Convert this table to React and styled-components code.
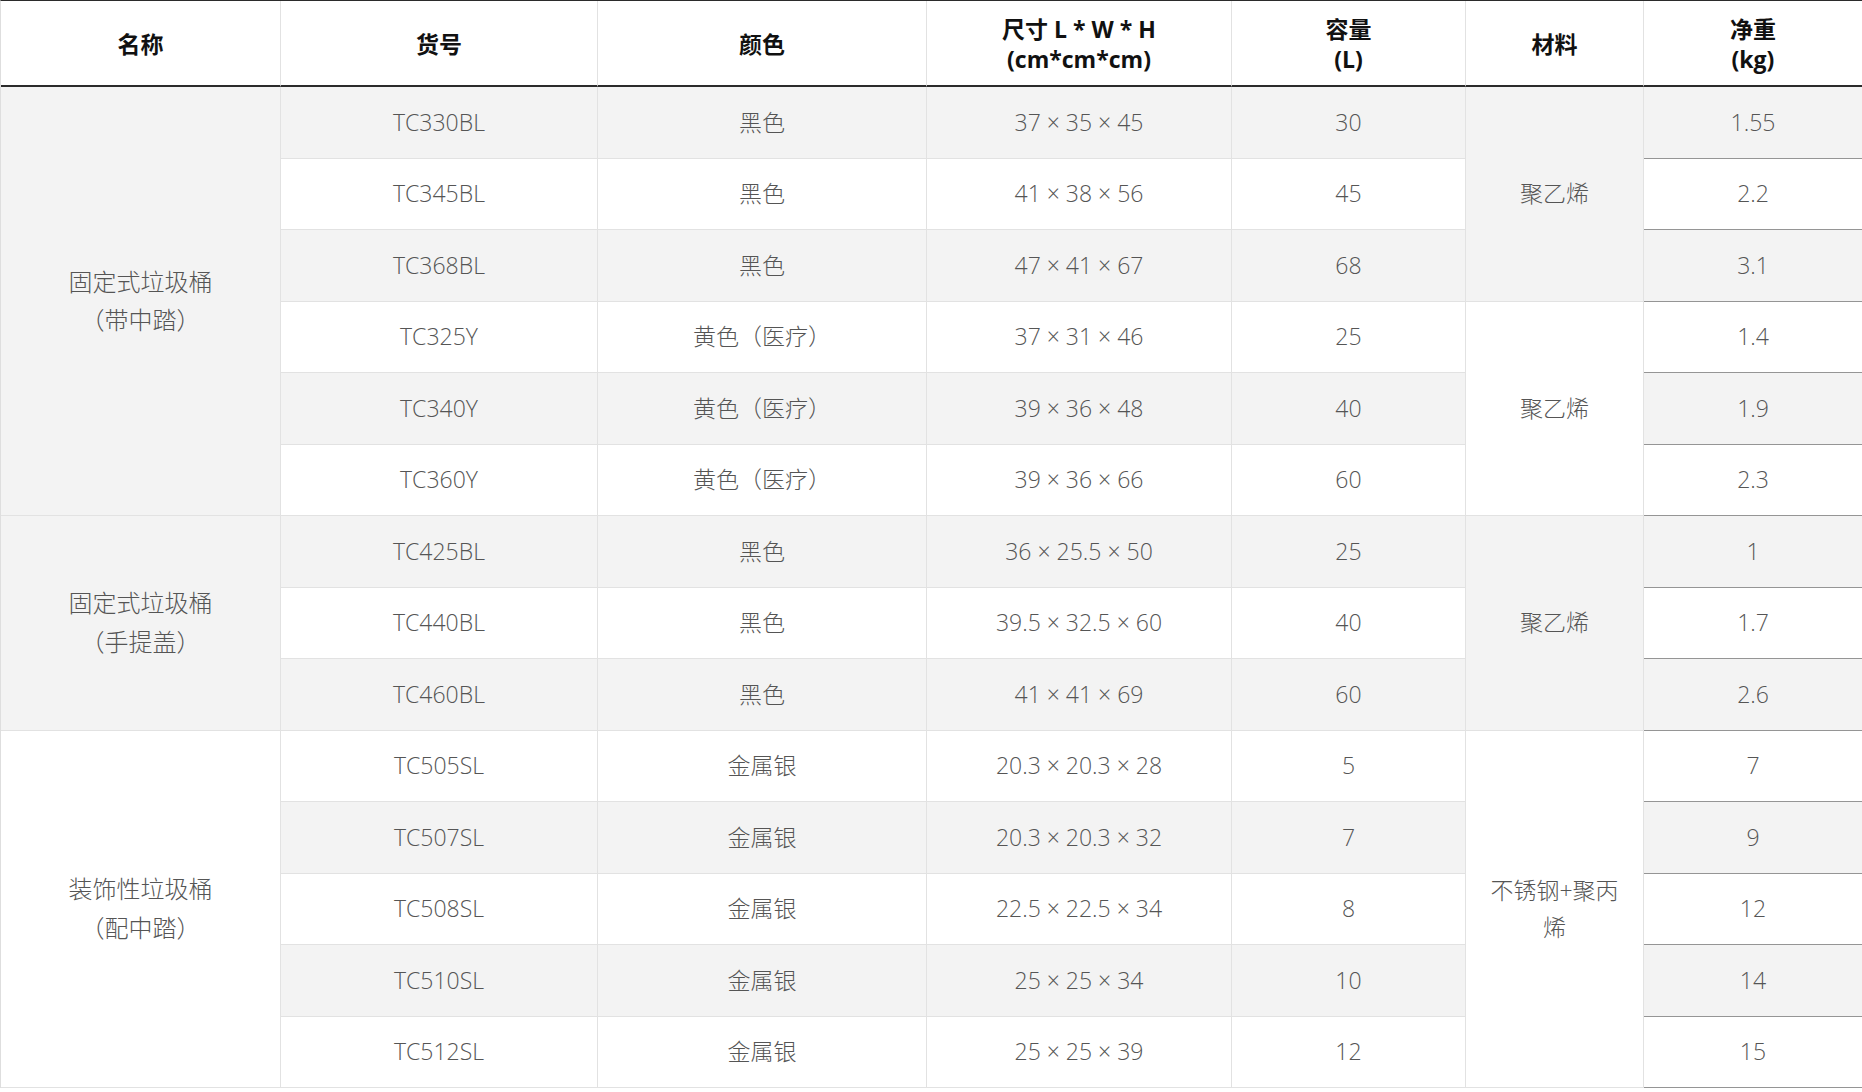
import React from "react";
import styled, { createGlobalStyle } from "styled-components";

const GlobalStyle = createGlobalStyle`
  html, body {
    margin: 0;
    padding: 0;
    background: #ffffff;
  }
  body {
    font-family: "Open Sans", "Noto Sans CJK SC", sans-serif;
  }
`;

const columns = [280, 317, 329, 305, 234, 178, 219];

const groups = [
  {
    name: ["固定式垃圾桶", "（带中踏）"],
    rows: [
      ["TC330BL", "黑色", "37 × 35 × 45", "30", "1.55"],
      ["TC345BL", "黑色", "41 × 38 × 56", "45", "2.2"],
      ["TC368BL", "黑色", "47 × 41 × 67", "68", "3.1"],
      ["TC325Y", "黄色（医疗）", "37 × 31 × 46", "25", "1.4"],
      ["TC340Y", "黄色（医疗）", "39 × 36 × 48", "40", "1.9"],
      ["TC360Y", "黄色（医疗）", "39 × 36 × 66", "60", "2.3"],
    ],
  },
  {
    name: ["固定式垃圾桶", "（手提盖）"],
    rows: [
      ["TC425BL", "黑色", "36 × 25.5 × 50", "25", "1"],
      ["TC440BL", "黑色", "39.5 × 32.5 × 60", "40", "1.7"],
      ["TC460BL", "黑色", "41 × 41 × 69", "60", "2.6"],
    ],
  },
  {
    name: ["装饰性垃圾桶", "（配中踏）"],
    rows: [
      ["TC505SL", "金属银", "20.3 × 20.3 × 28", "5", "7"],
      ["TC507SL", "金属银", "20.3 × 20.3 × 32", "7", "9"],
      ["TC508SL", "金属银", "22.5 × 22.5 × 34", "8", "12"],
      ["TC510SL", "金属银", "25 × 25 × 34", "10", "14"],
      ["TC512SL", "金属银", "25 × 25 × 39", "12", "15"],
    ],
  },
];

// material cells start at these row indexes
const materials = {
  0: { text: "聚乙烯", span: 3 },
  3: { text: "聚乙烯", span: 3 },
  6: { text: "聚乙烯", span: 3 },
  9: { text: "不锈钢+聚丙烯", span: 5 },
};

const Table = styled.table`
  width: 100%;
  table-layout: fixed;
  border-collapse: separate;
  border-spacing: 0;
  border-top: 1px solid #2b2b2b;
  border-left: 1px solid #dedede;
  font-size: 23px;
`;

const Head = styled.th`
  height: 80px;
  padding: 4px 8px 0;
  font-weight: 700;
  color: #111;
  line-height: 1.3;
  text-align: center;
  vertical-align: middle;
  border-right: 1px solid #e2e2e2;
  border-bottom: 2px solid #2b2b2b;
`;

const Cell = styled.td`
  height: 70.5px;
  padding: 0 16px;
  font-weight: 300;
  color: #555555;
  line-height: 1.6;
  text-align: center;
  vertical-align: middle;
  background: ${(p) => (p.$shade ? "#f3f3f3" : "#ffffff")};
  border-right: 1px solid #e2e2e2;
  border-bottom: 1px solid ${(p) => (p.$strong ? "#959595" : "#e2e2e2")};
`;

const Line = styled.span`
  display: block;
  font-size: ${(p) => (p.$big ? "24px" : "inherit")};
`;

const App = () => {
  let index = 0;
  const body = [];

  groups.forEach((group) => {
    const groupStart = index;
    group.rows.forEach((row, r) => {
      const shade = index % 2 === 0;
      const material = materials[index];
      body.push(
        <tr key={row[0]}>
          {r === 0 && (
            <Cell rowSpan={group.rows.length} $shade={groupStart % 2 === 0}>
              {group.name.map((t) => (
                <Line key={t} $big>
                  {t}
                </Line>
              ))}
            </Cell>
          )}
          <Cell $shade={shade}>{row[0]}</Cell>
          <Cell $shade={shade}>{row[1]}</Cell>
          <Cell $shade={shade}>{row[2]}</Cell>
          <Cell $shade={shade}>{row[3]}</Cell>
          {material && (
            <Cell rowSpan={material.span} $shade={index % 2 === 0}>
              {material.text}
            </Cell>
          )}
          <Cell $shade={shade} $strong>
            {row[4]}
          </Cell>
        </tr>
      );
      index += 1;
    });
  });

  return (
    <>
      <GlobalStyle />
      <Table>
        <colgroup>
          {columns.map((w, i) => (
            <col key={i} style={{ width: w }} />
          ))}
        </colgroup>
        <thead>
          <tr>
            <Head>名称</Head>
            <Head>货号</Head>
            <Head>颜色</Head>
            <Head>
              尺寸 L * W * H
              <br />
              (cm*cm*cm)
            </Head>
            <Head>
              容量
              <br />
              (L)
            </Head>
            <Head>材料</Head>
            <Head>
              净重
              <br />
              (kg)
            </Head>
          </tr>
        </thead>
        <tbody>{body}</tbody>
      </Table>
    </>
  );
};

export default App;
